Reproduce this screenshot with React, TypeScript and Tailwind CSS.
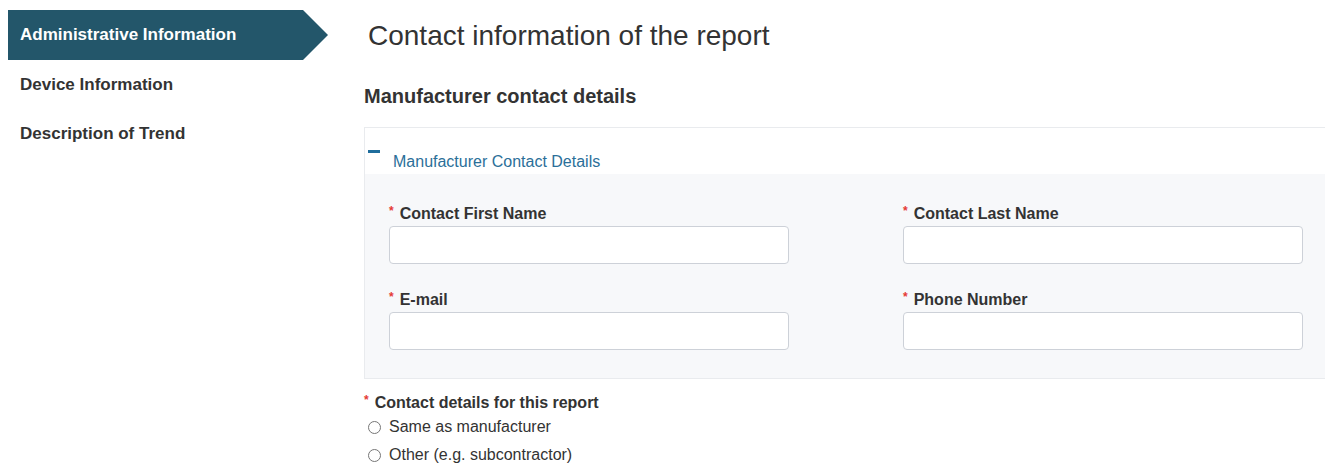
import React, { useState } from "react";

const navItems = [
  "Administrative Information",
  "Device Information",
  "Description of Trend",
];

function Required() {
  return (
    <span className="mr-[6px] inline-block -translate-y-[3px] text-[12px] leading-none text-[#e53935]">
      *
    </span>
  );
}

function Field({ label }: { label: string }) {
  return (
    <div className="flex flex-col">
      <label className="flex items-center text-[16px] font-bold leading-[20px] text-[#333]">
        <Required />
        {label}
      </label>
      <input
        type="text"
        className="mt-[2px] h-[38px] w-[400px] rounded-[4px] border border-[#cdd1d8] bg-white px-3 text-[16px] outline-none"
      />
    </div>
  );
}

function Radio({ label, checked, onChange }: { label: string; checked: boolean; onChange: () => void }) {
  return (
    <label className="flex h-[28px] cursor-pointer items-center text-[16px] text-[#333]">
      <span
        onClick={onChange}
        className="ml-[4px] mr-[8px] flex h-[13px] w-[13px] items-center justify-center rounded-full border border-[#767676] bg-white"
      >
        {checked && <span className="h-[7px] w-[7px] rounded-full bg-[#333]" />}
      </span>
      <span onClick={onChange}>{label}</span>
    </label>
  );
}

export default function App() {
  const [active, setActive] = useState(0);
  const [open, setOpen] = useState(true);
  const [contact, setContact] = useState<string | null>(null);

  return (
    <div className="flex h-[472px] w-[1325px] overflow-hidden bg-white font-['Liberation_Sans',Arial,sans-serif] text-[#333]">
      {/* left navigation */}
      <nav className="w-[364px] shrink-0 pl-[8px] pt-[10px]">
        {navItems.map((item, i) =>
          i === active ? (
            <div
              key={item}
              className="flex h-[50px] w-[320px] items-center bg-[#23566a] pl-3 text-[17px] font-bold text-white [clip-path:polygon(0_0,295px_0,100%_50%,295px_100%,0_100%)]"
            >
              {item}
            </div>
          ) : (
            <button
              key={item}
              type="button"
              onClick={() => setActive(i)}
              className="flex h-[49px] w-[320px] items-center pl-3 text-left text-[17px] font-bold text-[#333]"
            >
              {item}
            </button>
          )
        )}
      </nav>

      {/* main form */}
      <main className="min-w-0 flex-1 pt-[18px]">
        <h1 className="ml-[4px] text-[28px] leading-[36px] font-normal text-[#333]">
          Contact information of the report
        </h1>
        <h2 className="mt-[30px] text-[20px] font-bold leading-[24px] text-[#333]">
          Manufacturer contact details
        </h2>

        <section className="mt-[19px] border-y border-l border-[#e9ebee]">
          <button
            type="button"
            onClick={() => setOpen((o) => !o)}
            className="flex h-[46px] w-full items-start bg-white text-left"
          >
            <span className="ml-[3px] mt-[22px] h-[2.5px] w-[12px] bg-[#1f6d9c]" />
            <span className="ml-[13px] mt-[24px] text-[16px] leading-[20px] text-[#2b6f99]">
              Manufacturer Contact Details
            </span>
          </button>
          {open && (
            <div className="grid grid-cols-[514px_400px] gap-y-[26px] bg-[#f7f8fa] pb-[28px] pl-[24px] pt-[30px]">
              <Field label="Contact First Name" />
              <Field label="Contact Last Name" />
              <Field label="E-mail" />
              <Field label="Phone Number" />
            </div>
          )}
        </section>

        <div className="mt-[14px]">
          <div className="flex items-center text-[16px] font-bold leading-[20px] text-[#333]">
            <Required />
            Contact details for this report
          </div>
          <Radio
            label="Same as manufacturer"
            checked={contact === "same"}
            onChange={() => setContact("same")}
          />
          <Radio
            label="Other (e.g. subcontractor)"
            checked={contact === "other"}
            onChange={() => setContact("other")}
          />
        </div>
      </main>
    </div>
  );
}
